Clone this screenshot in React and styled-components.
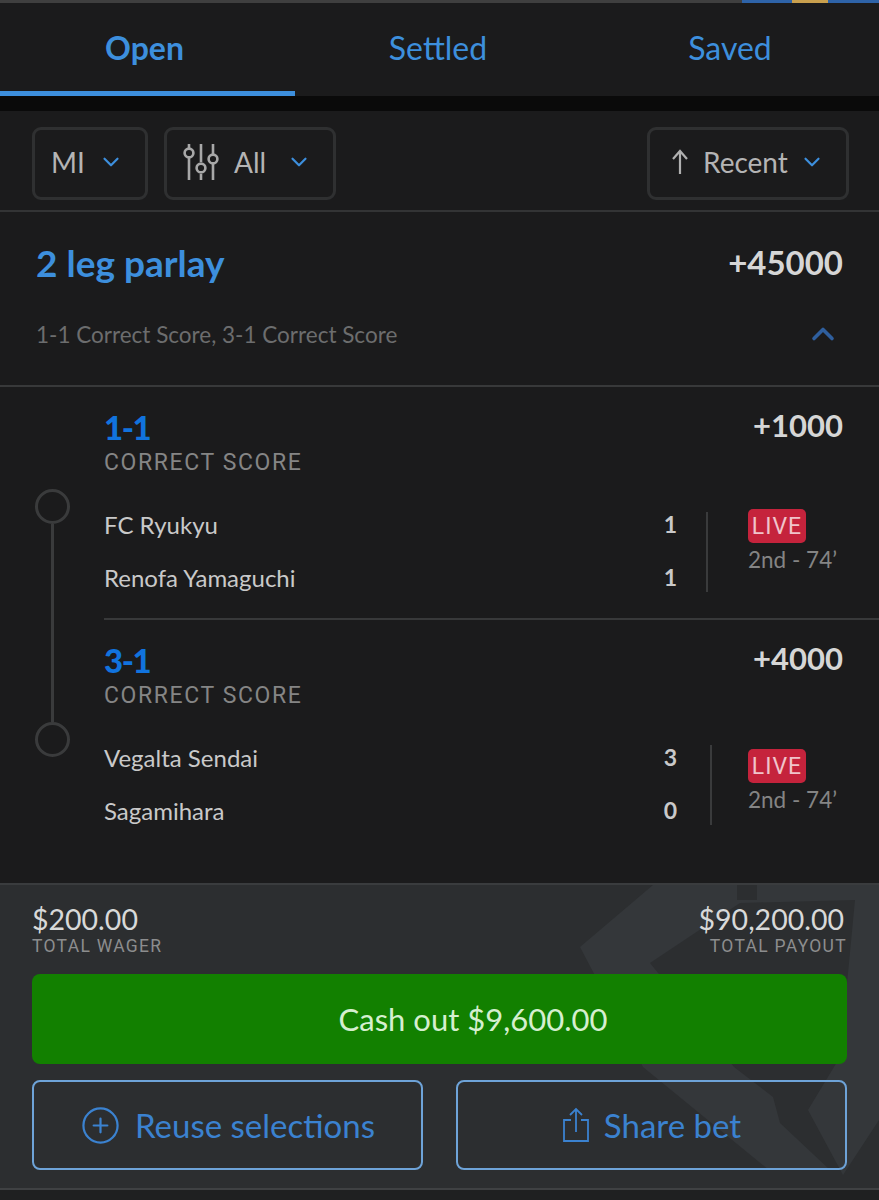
import React from 'react';
import styled, { createGlobalStyle } from 'styled-components';
import { ChevronDown, ChevronUp, CirclePlus } from 'lucide-react';

const legs = [
  {
    score: '1-1',
    odds: '+1000',
    dividerGap: 29,
    statusDrop: -3,
    teams: [
      { name: 'FC Ryukyu', goals: 1 },
      { name: 'Renofa Yamaguchi', goals: 1 },
    ],
  },
  {
    score: '3-1',
    odds: '+4000',
    dividerGap: 33,
    statusDrop: 4,
    teams: [
      { name: 'Vegalta Sendai', goals: 3 },
      { name: 'Sagamihara', goals: 0 },
    ],
  },
];

const SlidersIcon = () => (
  <svg width="36" height="36" viewBox="0 0 36 36" fill="none" stroke="#a8a8a8" strokeWidth="2.6">
    <path d="M6 0v4M6 14v22M18 0v18M18 30v6M30 0v10M30 20v16" />
    <circle cx="6" cy="9" r="4.4" />
    <circle cx="18" cy="24" r="4.4" />
    <circle cx="30" cy="15" r="4.4" />
  </svg>
);

const ArrowIcon = () => (
  <svg width="28" height="28" viewBox="0 0 28 28" fill="none" stroke="#b0b0b0" strokeWidth="2.2">
    <path d="M14 26V4M7 11l7-8 7 8" />
  </svg>
);

const ShareIcon = () => (
  <svg width="28" height="36" viewBox="0 0 28 36" fill="none" stroke="currentColor" strokeWidth="1.8">
    <path d="M9 13H2v21h24V13h-7M14 25V2M8 8l6-6 6 6" />
  </svg>
);

const App = () => (
  <React.Fragment>
    <GlobalStyle />
    <Page>
      <TopStrip>
        <StripPart $color="#3f3f3f" $grow={742} />
        <StripPart $color="#2e63a8" $grow={50} />
        <StripPart $color="#c9a04e" $grow={36} />
        <StripPart $color="#2e63a8" $grow={51} />
      </TopStrip>

      <Tabs>
        <Tab $active>Open</Tab>
        <Tab>Settled</Tab>
        <Tab>Saved</Tab>
      </Tabs>
      <BlackBand />

      <Filters>
        <Chip $width={116}>
          MI
          <Caret size={26} strokeWidth={2} />
        </Chip>
        <Chip $width={172} $gap={15}>
          <SlidersIcon />
          All
          <Caret size={26} strokeWidth={2} />
        </Chip>
        <Spacer />
        <Chip $width={202} $gap={9}>
          <ArrowIcon />
          Recent
          <Caret size={26} strokeWidth={2} />
        </Chip>
      </Filters>

      <Summary>
        <SummaryTop>
          <ParlayTitle>2 leg parlay</ParlayTitle>
          <ParlayOdds>+45000</ParlayOdds>
        </SummaryTop>
        <SummaryBottom>
          <SummaryText>1-1 Correct Score, 3-1 Correct Score</SummaryText>
          <ChevronUp size={36} strokeWidth={2.4} color="#2f5f9e" />
        </SummaryBottom>
      </Summary>

      <LegsArea>
        <Rail>
          <RailDot />
          <RailLine />
          <RailDot />
        </Rail>
        <LegList>
          {legs.map((leg, i) => (
            <Leg key={leg.score} $last={i === legs.length - 1}>
              <LegHead>
                <LegScore>{leg.score}</LegScore>
                <LegOdds>{leg.odds}</LegOdds>
              </LegHead>
              <MarketName>CORRECT SCORE</MarketName>
              <Match>
                <TeamList>
                  {leg.teams.map(team => (
                    <TeamRow key={team.name}>
                      <TeamName>{team.name}</TeamName>
                      <Goals>{team.goals}</Goals>
                    </TeamRow>
                  ))}
                </TeamList>
                <MatchDivider $gap={leg.dividerGap} />
                <Status $drop={leg.statusDrop}>
                  <LiveBadge>LIVE</LiveBadge>
                  <Clock>2nd - 74’</Clock>
                </Status>
              </Match>
            </Leg>
          ))}
        </LegList>
      </LegsArea>

      <Footer>
        <Watermark width="300" height="305" viewBox="0 0 300 305">
          <path
            d="M1 62 L74 0 H158 V15 H178 V0 H300 V235 L264 290 L229 225 L261 172 L276 15 L161 18 L71 78 L155 182 L194 212 L201 238 L251 285 H190 L64 182 Z"
            fill="#34373a"
          />
        </Watermark>
        <Totals>
          <TotalBlock>
            <TotalAmount>$200.00</TotalAmount>
            <TotalLabel>TOTAL WAGER</TotalLabel>
          </TotalBlock>
          <TotalBlock $right>
            <TotalAmount $inset>$90,200.00</TotalAmount>
            <TotalLabel>TOTAL PAYOUT</TotalLabel>
          </TotalBlock>
        </Totals>
        <CashOut>Cash out $9,600.00</CashOut>
        <Actions>
          <ActionButton>
            <CirclePlus size={41} strokeWidth={1.3} />
            Reuse selections
          </ActionButton>
          <ActionButton>
            <ShareIcon />
            Share bet
          </ActionButton>
        </Actions>
      </Footer>
      <BottomEdge />
    </Page>
  </React.Fragment>
);

const GlobalStyle = createGlobalStyle`
  html, body, #root {
    margin: 0;
    width: 100%;
    background-color: #1b1b1c;
  }

  body {
    font-family: Lato, "Open Sans", sans-serif;
  }
`;

const Page = styled.div`
  width: 879px;
  height: 1200px;
  overflow: hidden;
  display: flex;
  flex-direction: column;
  background-color: #1b1b1c;
`;

const TopStrip = styled.div`
  height: 3px;
  display: flex;
`;

const StripPart = styled.div`
  flex: ${p => p.$grow} 0 0;
  background-color: ${p => p.$color};
`;

const Tabs = styled.nav`
  height: 93px;
  display: grid;
  grid-template-columns: 295px 1fr 1fr;
`;

const Tab = styled.div`
  display: flex;
  justify-content: center;
  padding: 26px 6px 0 0;
  box-sizing: border-box;
  font-size: 32px;
  line-height: 38px;
  font-weight: ${p => (p.$active ? 700 : 400)};
  color: #3d8fdd;
  border-bottom: 5px solid ${p => (p.$active ? '#3d8fdd' : 'transparent')};
`;

const BlackBand = styled.div`
  height: 15px;
  background-color: #0a0a0a;
`;

const Filters = styled.div`
  height: 101px;
  box-sizing: border-box;
  display: flex;
  align-items: center;
  gap: 16px;
  padding: 6px 30px 0 32px;
  border-bottom: 2px solid #333435;
`;

const Spacer = styled.div`
  flex: 1;
`;

const Chip = styled.div`
  width: ${p => p.$width}px;
  height: 73px;
  box-sizing: border-box;
  display: flex;
  align-items: center;
  gap: ${p => p.$gap || 0}px;
  padding: 0 21px 3px 16px;
  border: 3px solid #2f3031;
  border-radius: 9px;
  font-size: 28px;
  color: #b4b4b4;
`;

const Caret = styled(ChevronDown)`
  color: #3d8fdd;
  margin-left: auto;
`;

const Summary = styled.section`
  height: 175px;
  box-sizing: border-box;
  display: flex;
  flex-direction: column;
  border-bottom: 2px solid #38393a;
  padding: 0 36px;
`;

const SummaryTop = styled.div`
  display: flex;
  justify-content: space-between;
  align-items: center;
  margin-top: 28px;
  height: 44px;
`;

const ParlayTitle = styled.h2`
  margin: 0;
  font-size: 37px;
  font-weight: 700;
  color: #3d8fdd;
`;

const ParlayOdds = styled.span`
  font-size: 33px;
  font-weight: 700;
  color: #d6d6d6;
`;

const SummaryBottom = styled.div`
  display: flex;
  justify-content: space-between;
  align-items: center;
  margin-top: 32px;
  padding-right: 2px;
`;

const SummaryText = styled.span`
  font-size: 22.5px;
  color: #6c6d6e;
`;

const LegsArea = styled.section`
  height: 496px;
  display: grid;
  grid-template-columns: 104px 1fr;
`;

const Rail = styled.div`
  display: flex;
  flex-direction: column;
  align-items: center;
  width: 104px;
  padding-top: 102px;
  box-sizing: border-box;
`;

const RailDot = styled.div`
  width: 35px;
  height: 35px;
  box-sizing: border-box;
  border: 3px solid #3a3b3c;
  border-radius: 50%;
`;

const RailLine = styled.div`
  width: 3px;
  height: 198px;
  background-color: #3a3b3c;
`;

const LegList = styled.div`
  display: flex;
  flex-direction: column;
`;

const Leg = styled.article`
  height: 233px;
  box-sizing: border-box;
  padding: 21px 36px 0 0;
  border-bottom: ${p => (p.$last ? 'none' : '2px solid #38393a')};
`;

const LegHead = styled.div`
  display: flex;
  justify-content: space-between;
  height: 38px;
`;

const LegScore = styled.span`
  font-size: 33px;
  line-height: 38px;
  font-weight: 900;
  letter-spacing: -1.5px;
  color: #1173de;
`;

const LegOdds = styled.span`
  font-size: 31px;
  line-height: 34px;
  font-weight: 700;
  color: #d6d6d6;
`;

const MarketName = styled.div`
  font-family: Roboto, sans-serif;
  font-size: 23px;
  line-height: 30px;
  letter-spacing: 1.6px;
  color: #858585;
  margin-top: 2px;
`;

const Match = styled.div`
  display: flex;
  margin-top: 34px;
`;

const TeamList = styled.div`
  width: 573px;
  margin-top: -8px;
  display: flex;
  flex-direction: column;
  gap: 13px;
`;

const TeamRow = styled.div`
  height: 40px;
  display: flex;
  justify-content: space-between;
  align-items: center;
`;

const TeamName = styled.span`
  font-size: 24px;
  color: #c9c9c9;
`;

const Goals = styled.span`
  font-size: 23px;
  font-weight: 700;
  color: #c9c9c9;
`;

const MatchDivider = styled.div`
  width: 2px;
  height: 80px;
  margin: 0 ${p => 69 - p.$gap}px 0 ${p => p.$gap}px;
  background-color: #3a3b3c;
`;

const Status = styled.div`
  display: flex;
  flex-direction: column;
  align-items: flex-start;
  margin-top: ${p => p.$drop}px;
`;

const LiveBadge = styled.span`
  height: 34px;
  width: 58px;
  display: flex;
  align-items: center;
  justify-content: center;
  border-radius: 5px;
  background-color: #c5233c;
  color: #f0c4cb;
  font-size: 23px;
  font-family: Roboto, sans-serif;
  letter-spacing: 1px;
`;

const Clock = styled.span`
  margin-top: 3px;
  font-size: 22.5px;
  line-height: 28px;
  color: #848484;
  white-space: nowrap;
`;

const Footer = styled.footer`
  position: relative;
  height: 307px;
  box-sizing: border-box;
  padding: 19px 32px 0;
  display: flex;
  flex-direction: column;
  background-color: #2c2e30;
  border-top: 2px solid #3a3c3e;
  border-bottom: 2px solid #3f4143;
  overflow: hidden;
`;

const Watermark = styled.svg`
  position: absolute;
  top: 0;
  right: 0;
`;

const Totals = styled.div`
  position: relative;
  display: flex;
  justify-content: space-between;
  height: 70px;
`;

const TotalBlock = styled.div`
  display: flex;
  flex-direction: column;
  align-items: ${p => (p.$right ? 'flex-end' : 'flex-start')};
`;

const TotalAmount = styled.span`
  font-size: 28.5px;
  line-height: 30px;
  color: #d8d9d9;
  padding-right: ${p => (p.$inset ? 3 : 0)}px;
`;

const TotalLabel = styled.span`
  font-family: Roboto, sans-serif;
  font-size: 17.5px;
  line-height: 24px;
  letter-spacing: 1.3px;
  color: #8c8d8e;
`;

const CashOut = styled.button`
  position: relative;
  height: 90px;
  border: none;
  border-radius: 8px;
  padding: 0 0 0 67px;
  background-color: #128000;
  color: #d5efcf;
  font-family: inherit;
  font-size: 31px;
`;

const Actions = styled.div`
  position: relative;
  display: grid;
  grid-template-columns: 391px 391px;
  justify-content: space-between;
  margin-top: 16px;
`;

const ActionButton = styled.button`
  height: 90px;
  display: flex;
  align-items: center;
  justify-content: center;
  gap: 14px;
  border: 2px solid #6ea3d8;
  border-radius: 8px;
  background-color: transparent;
  color: #3b82d0;
  font-family: inherit;
  font-size: 33px;
`;

const BottomEdge = styled.div`
  flex: 1;
  background-color: #1f2021;
`;

export default App;
